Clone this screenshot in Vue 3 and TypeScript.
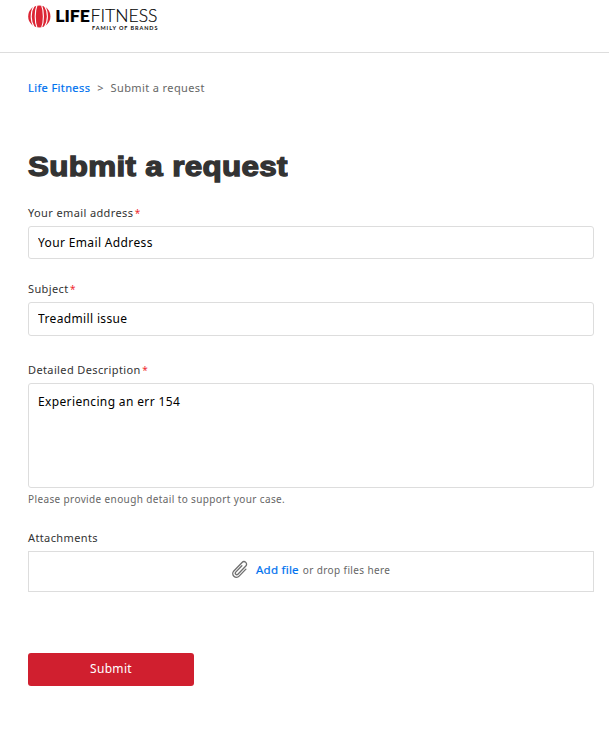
<script setup lang="ts">
import { ref } from 'vue'

const email = ref('Your Email Address')
const subject = ref('Treadmill issue')
const description = ref('Experiencing an err 154')
</script>

<template>
  <div class="page">
    <header class="header">
      <svg class="logo" width="132" height="30" viewBox="0 0 132 30" role="img">
        <ellipse cx="11.3" cy="12.4" rx="11.1" ry="11" fill="#dc2534" />
        <g fill="none" stroke="#fff" stroke-width="1.1">
          <path d="M9 1.2C6.6 7 6.6 18 9 23.6M13.6 1.2C16 7 16 18 13.6 23.6" />
          <path d="M6.2 1.8C2.2 8 2.2 17 6.2 23M16.4 1.8C20.4 8 20.4 17 16.4 23" />
        </g>
        <text class="logo-bold" x="27.3" y="17.6" textLength="34.5" lengthAdjust="spacingAndGlyphs">LIFE</text>
        <text class="logo-light" x="62.5" y="17.6" textLength="67" lengthAdjust="spacingAndGlyphs">FITNESS</text>
        <text class="logo-small" x="64" y="26" textLength="65.5" lengthAdjust="spacing">FAMILY OF BRANDS</text>
      </svg>
    </header>
    <main class="content">
      <nav class="crumbs">
        <a class="link crumb-home">Life Fitness</a>
        <span class="sep">&gt;</span>
        <span class="crumb-current">Submit a request</span>
      </nav>
      <h1 class="title">Submit a request</h1>
      <form class="form" @submit.prevent>
        <label class="label"><span class="t-email">Your email address</span><b>*</b></label>
        <input v-model="email" class="field input-email" type="text" />
        <label class="label label-subject"><span class="t-subject">Subject</span><b>*</b></label>
        <input v-model="subject" class="field input-subject" type="text" />
        <label class="label label-desc"><span class="t-desc">Detailed Description</span><b>*</b></label>
        <textarea v-model="description" class="field area"></textarea>
        <p class="hint">Please provide enough detail to support your case.</p>
        <label class="label label-attach"><span class="t-attach">Attachments</span></label>
        <div class="drop">
          <svg class="clip" width="18" height="20" viewBox="0 0 18 20" fill="none" stroke="#707070" stroke-width="1.35" stroke-linecap="round">
            <path transform="translate(9.3 9.6) rotate(44)" d="M-1.5-3.8V5a1.5 1.5 0 0 0 3 0V-6.4a2.6 2.6 0 0 0-5.2 0V5.5a3.7 3.7 0 0 0 7.4 0V-4.2" />
          </svg>
          <a class="link add">Add file</a><span class="drop-text">or drop files here</span>
        </div>
        <button class="submit" type="submit">Submit</button>
      </form>
    </main>
  </div>
</template>

<style>
body { background: #fff; overflow: hidden; }
</style>

<style scoped>
.page { height: 729px; font-family: "Noto Sans", sans-serif; color: #333; font-size: 11px; }
.header { box-sizing: border-box; height: 53px; padding: 4px 28px 0; border-bottom: 1px solid #ddd; }
.logo { display: block; }
.logo-bold { font: 900 16.2px Lato, sans-serif; fill: #000; stroke: #000; stroke-width: 0.2px; }
.logo-light { font: 300 17px Lato, sans-serif; fill: #000; stroke: #000; stroke-width: 0.15px; }
.logo-small { font: 700 5.5px Lato, sans-serif; fill: #111; }
.content { padding: 0 15px 0 28px; }
.crumbs { display: flex; align-items: center; height: 20px; margin-top: 24px; color: #666; white-space: nowrap; }
.link { color: #0072ef; }
.crumb-home { letter-spacing: 0.4px; -webkit-text-stroke: 0.2px #0072ef; }
.sep { margin: 0 7px; }
.crumb-current { letter-spacing: 0.38px; }
.title { width: max-content; margin: 50px 0 0; height: 39px; font: 700 28px/40px "Liberation Sans", Arial, sans-serif; letter-spacing: 0.3px; -webkit-text-stroke: 1.3px #333; white-space: nowrap; transform: scaleX(1.12); transform-origin: 0 50%; }
.form { display: flex; flex-direction: column; align-items: stretch; }
.label { height: 18px; line-height: 18px; margin-top: 18px; white-space: nowrap; letter-spacing: 0.38px; }
.label b { margin-left: 1.5px; color: #f02a30; font-weight: 400; font-size: 10px; }
.field { box-sizing: border-box; width: 100%; margin: 4px 0 0; padding: 0 9px; border: 1px solid #ddd; border-radius: 3px; outline: 0; background: #fff; color: #000; font: 12px/18px "Noto Sans", sans-serif; letter-spacing: 0.36px; }
.input-email { height: 33px; }
.label-subject { margin-top: 21px; }
.input-subject { height: 34px; padding-bottom: 2px; }
.label-desc { margin-top: 25px; }
.area { display: block; height: 105px; padding-top: 9px; resize: none; }
.hint { margin: 2px 0 0; height: 18px; line-height: 18px; font-size: 10px; color: #666; letter-spacing: 0.38px; }
.label-attach { margin-top: 21px; }
.drop { box-sizing: border-box; display: flex; align-items: center; height: 41px; margin-top: 4px; padding: 0 0 3px 202px; border: 1px solid #ddd; white-space: nowrap; }
.clip { margin-right: 7px; }
.add { font-size: 11.5px; line-height: 16px; margin-top: -1px; letter-spacing: 0.25px; -webkit-text-stroke: 0.2px #0072ef; }
.drop-text { margin-left: 4px; font-size: 10px; color: #666; letter-spacing: 0.38px; }
.submit { width: 166px; height: 33px; margin-top: 61px; padding: 0 0 2px; border: 0; border-radius: 3px; background: #d01f2f; color: #fff; font: 12px/31px "Noto Sans", sans-serif; letter-spacing: 0.3px; }
</style>
